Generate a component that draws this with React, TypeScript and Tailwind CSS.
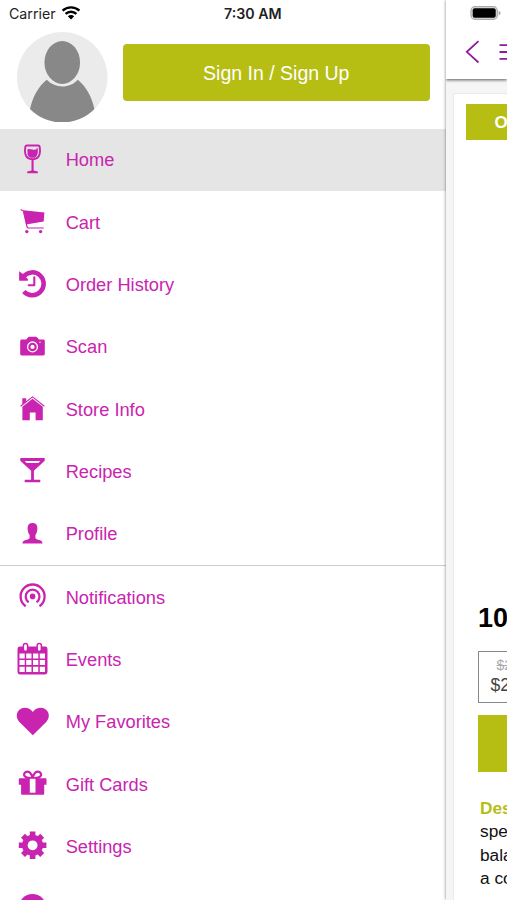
import type { ReactNode } from "react";

interface MenuItem {
  label: string;
  icon: ReactNode;
  active?: boolean;
}

const mainItems: MenuItem[] = [
  {
    label: "Home",
    active: true,
    icon: (
      <>
        <path
          d="M12.8 3.500h11.400c.9 0 1.400.4 1.500 1.300.4 2.600.5 5 0 7-.9 3.600-3.600 5.500-7.200 5.500s-6.300-1.900-7.200-5.500c-.5-2-.4-4.400 0-7 .1-.9.6-1.300 1.500-1.300Z"
          fill="none"
          stroke="currentColor"
          strokeWidth="1.900"
        />
        <path d="M13.500 7.300c1.600-.7 3.200-.2 4.800.2 1.600.4 3.200.3 5-.4v4.300c0 3-1.800 4.400-4.800 4.400s-5-1.400-5-4.400Z" />
        <path d="M23.300 6v5.500" stroke="currentColor" strokeWidth=".9" />
        <path d="M17.500 17.500h2.100v11l4.300.9v1.800H13.200v-1.800l4.300-.9Z" />
      </>
    ),
  },
  {
    label: "Cart",
    icon: (
      <>
        <path d="M9.400 6.300 30.400 8.500l-.7 9-17.600 3.100Z" />
        <path
          d="M7 5.700 9.300 6.800l3.700 15.800c.2 1 .6 1.400 1.600 1.400h14.700"
          fill="none"
          stroke="currentColor"
          strokeWidth="1.200"
          strokeLinecap="round"
        />
        <circle cx="12.800" cy="27.600" r="1.700" />
        <circle cx="26.600" cy="27.600" r="1.700" />
      </>
    ),
  },
  {
    label: "Order History",
    icon: (
      <>
        <path
          d="M9.500 10.500a11.400 11.400 0 1 1 .3 14.900"
          fill="none"
          stroke="currentColor"
          strokeWidth="4.500"
        />
        <path d="M5.100 5.200 8.200 7.400l5.800 5.900-.2 1.500H6c-.6 0-.9-.3-.9-.9Z" />
        <path
          d="M20.300 11.300v7.900h-5.600"
          fill="none"
          stroke="currentColor"
          strokeWidth="2.100"
          strokeLinecap="round"
          strokeLinejoin="round"
        />
      </>
    ),
  },
  {
    label: "Scan",
    icon: (
      <>
        <path d="M7.800 10.500h4.400l1.700-2.100c.4-.5.8-.7 1.400-.7h6.600c.6 0 1 .2 1.400.7l1.700 2.100h4.200c1 0 1.600.6 1.600 1.600v12.700c0 1-.6 1.600-1.600 1.600H7.800c-1 0-1.600-.6-1.600-1.600V12.100c0-1 .6-1.600 1.600-1.600Z" />
        <circle cx="18.500" cy="17.900" r="4.900" fill="none" stroke="#fff" strokeWidth="1.300" />
        <circle cx="18.500" cy="17.900" r="2.100" fill="#fff" />
        <circle cx="26" cy="13.200" r=".7" fill="#fff" />
      </>
    ),
  },
  {
    label: "Store Info",
    icon: (
      <>
        <path d="M8.300 7.200h3.900v3.300l-3.900 3.200Z" />
        <path
          d="m6.600 15.200 11.900-9.300 11.900 9.300"
          fill="none"
          stroke="currentColor"
          strokeWidth="1.100"
        />
        <path d="m8.400 15.700 10.100-7.900 10.300 7.900v13.600h-7.200v-7.800h-5.800v7.800H8.400Z" />
      </>
    ),
  },
  {
    label: "Recipes",
    icon: (
      <>
        <path
          fillRule="evenodd"
          d="M6.300 5h24.400v2.800l-10.800 10v8.900h6.400v2.600H10.700v-2.600h6.400v-8.900L6.300 7.800Zm4.400 3 1.900 1.900h11.800L26.300 8Z"
        />
      </>
    ),
  },
  {
    label: "Profile",
    icon: (
      <path d="M18.500 7c3.200 0 4.900 1.900 4.900 5 0 3.200-.9 5.800-2 7.100v2.500c0 1.200.8 1.600 2.700 2.100 3.100.8 4.400 1.500 4.400 3.700h-20c0-2.200 1.300-2.900 4.400-3.700 1.900-.5 2.700-.9 2.700-2.100v-2.500c-1.100-1.300-2-3.900-2-7.100 0-3.100 1.700-5 4.900-5Z" />
    ),
  },
];

const moreItems: MenuItem[] = [
  {
    label: "Notifications",
    icon: (
      <>
        <circle cx="18.600" cy="17.400" r="2.800" />
        <path
          d="M14.700 23.200a6.900 6.900 0 1 1 7.800 0M11.700 27.300a12 12 0 1 1 13.800 0"
          fill="none"
          stroke="currentColor"
          strokeWidth="2.300"
        />
      </>
    ),
  },
  {
    label: "Events",
    icon: (
      <>
        <rect x="3.500" y="5.500" width="30" height="28" rx="2.400" />
        <path
          fill="#fff"
          d="M5.500 12.500h5.200v5H5.500Zm6.700 0h5.300v5h-5.300Zm6.800 0h5.300v5H19Zm6.800 0h5.200v5h-5.200ZM5.500 19.100h5.200v5H5.500Zm6.700 0h5.300v5h-5.300Zm6.800 0h5.300v5H19Zm6.800 0h5.200v5h-5.200ZM5.500 25.800h5.200v5.300H5.500Zm6.700 0h5.300v5.300h-5.300Zm6.800 0h5.300v5.300H19Zm6.800 0h5.200v5.300h-5.200Z"
        />
        <rect x="9.400" y="2.400" width="4.200" height="8" rx="2.100" fill="#fff" stroke="currentColor" strokeWidth="1.500" />
        <rect x="23.200" y="2.400" width="4.200" height="8" rx="2.100" fill="#fff" stroke="currentColor" strokeWidth="1.500" />
      </>
    ),
  },
  {
    label: "My Favorites",
    icon: (
      <path d="M18.800 31.200 5.400 17.900C2.600 15 2 10.700 3.800 7.700c2.800-4.900 10-5.300 13.700-1.200l1.300 1.500 1.300-1.500c3.700-4.100 10.900-3.700 13.700 1.200 1.800 3 1.200 7.300-1.600 10.200Z" />
    ),
  },
  {
    label: "Gift Cards",
    icon: (
      <>
        <path
          d="M18.600 12c-4 .4-8.400-.4-8.500-3.200-.1-2 1.800-3.200 3.600-3.100 2.700.2 4.100 3.300 4.900 6.300.8-3 2.200-6.100 4.900-6.300 1.800-.1 3.700 1.100 3.600 3.100-.1 2.800-4.500 3.600-8.500 3.200Z"
          fill="none"
          stroke="currentColor"
          strokeWidth="2.200"
        />
        <path d="M5.900 12.300h25.500c.7 0 1.100.4 1.100 1.100v5.400h-2.300v8.600c0 .8-.5 1.300-1.300 1.300H8.400c-.8 0-1.300-.5-1.300-1.300v-8.600H4.800v-5.400c0-.7.4-1.100 1.100-1.100Z" />
        <path d="M15.800 12.800h5.700v13.900h-5.700Z" fill="#fff" />
      </>
    ),
  },
  {
    label: "Settings",
    icon: (
      <>
        <g stroke="currentColor" strokeWidth="5.600">
          <path d="M18.600 3.500v27.600M4.800 17.300h27.600M9 7.700l19.200 19.200M28.200 7.700 9 26.900" />
        </g>
        <circle cx="18.600" cy="17.300" r="10.600" />
        <circle cx="18.600" cy="17.300" r="4.900" fill="#fff" />
      </>
    ),
  },
  {
    label: "",
    icon: <circle cx="18.500" cy="16.800" r="13.800" />,
  },
];

function MenuRow({ label, icon, active }: MenuItem) {
  return (
    <li
      className={`flex h-[62.350px] shrink-0 items-center gap-[15.700px] pl-3.5 ${
        active ? "bg-[#e5e5e5]" : ""
      }`}
    >
      <svg viewBox="0 0 36 36" className="h-9 w-9 shrink-0 fill-current">
        {icon}
      </svg>
      <span className="pt-px text-[18.250px] leading-6 whitespace-nowrap">{label}</span>
    </li>
  );
}

function Drawer() {
  return (
    <aside className="flex h-full w-[446px] shrink-0 flex-col overflow-hidden bg-white">
      {/* Status bar */}
      <div className="flex h-7 shrink-0 items-center font-['Inter',sans-serif] text-sm text-[#222]">
        <span className="w-[54px] pl-[9px] text-[14.200px]">Carrier</span>
        <svg viewBox="0 0 20 15" className="-mt-1 ml-[7px] h-[15px] w-5 text-black">
          <path
            d="M1.600 5.700c4.700-4.500 12.100-4.500 16.800 0M4.600 8.900c3.100-2.900 7.700-2.900 10.800 0"
            fill="none"
            stroke="currentColor"
            strokeWidth="2.400"
          />
          <path d="M6.800 11.300c1.900-1.600 4.500-1.600 6.400 0L10 14.600Z" fill="currentColor" />
        </svg>
        <span className="ml-[143px] text-[14.200px] font-semibold whitespace-nowrap">7:30 AM</span>
      </div>

      {/* Account */}
      <div className="flex h-[100.500px] shrink-0 items-start pl-[17px]">
        <svg viewBox="0 0 90 90" className="mt-[3.500px] h-[90.500px] w-[90.500px]">
          <defs>
            <clipPath id="avatar">
              <circle cx="45" cy="45" r="45" />
            </clipPath>
          </defs>
          <circle cx="45" cy="45" r="45" fill="#ebebeb" />
          <g clipPath="url(#avatar)" fill="#888">
            <path d="M29.500 47.500C21.500 54 15.500 64.500 13 76.500v13.500h64V76.500C74.500 64.500 68.500 54 60.500 47.500 52 56.500 38.500 56.500 29.500 47.500Z" />
            <ellipse cx="45" cy="30.300" rx="17.700" ry="21.300" />
          </g>
        </svg>
        <button className="mt-[15.500px] ml-[15.500px] h-[57.500px] w-[306.500px] rounded bg-[#b6be14] pt-0.5 text-[19.500px] text-white">
          Sign In / Sign Up
        </button>
      </div>

      <ul className="flex shrink-0 flex-col text-[#c924af]">
        {mainItems.map((item) => (
          <MenuRow key={item.label} {...item} />
        ))}
      </ul>
      <ul className="flex flex-col border-t border-[#ccc] text-[#c924af]">
        {moreItems.map((item) => (
          <MenuRow key={item.label} {...item} />
        ))}
      </ul>
    </aside>
  );
}

function ProductPage() {
  return (
    <main className="relative flex h-full w-[61px] shrink-0 flex-col overflow-hidden bg-[#f5f5f5]">
      <header className="relative h-[79px] shrink-0 bg-white shadow-[0_1px_3px_rgba(0,0,0,0.65)]">
        <svg viewBox="0 0 61 79" className="h-[79px] w-[61px]">
          <rect x="25" y="6.700" width="26.300" height="12.600" rx="3.800" fill="#ddd" stroke="#aaa" strokeWidth="1.200" />
          <rect x="26.700" y="8.200" width="23" height="9.600" rx="2" />
          <path d="M52.600 10.800c2.600.9 2.600 3.700 0 4.600Z" fill="#aaa" />
          <path
            d="M32.500 41.200 20.800 51.800l11.700 10.700M53.500 45.200H61M53.500 52H61M53.500 58.800H61"
            fill="none"
            stroke="#8e1b9c"
            strokeWidth="1.800"
          />
        </svg>
      </header>

      {/* Product card */}
      <section className="mt-3.5 ml-[7px] flex w-[420px] grow flex-col border border-b-0 border-[#eaeaea] bg-white whitespace-nowrap">
        <div className="mt-[9.500px] ml-[11.500px] h-[36.500px] bg-[#b6be14] pl-[29px] text-[17px] leading-[37px] font-bold text-white">
          O
        </div>
        <div className="mt-[461.500px] ml-6 text-[27px] leading-[33px] font-bold text-black">10</div>
        <div className="mt-[16.500px] ml-[23.500px] flex h-[51.500px] flex-col border-[1.500px] border-[#888] pl-3">
          <span className="mt-1.5 ml-1.5 text-sm leading-[15px] text-[#aaa] line-through">$2</span>
          <span className="pt-px text-[17.500px] leading-[23px] text-[#444]">$2</span>
        </div>
        <div className="mt-3 ml-[23.500px] h-[57.500px] bg-[#b6be14]" />
        <div className="mt-[25px] ml-[26px] flex flex-col text-[17.300px] leading-[23.300px] text-[#111]">
          <strong className="text-[#b6be14]">Des</strong>
          <span>spe</span>
          <span>bala</span>
          <span>a co</span>
        </div>
      </section>
    </main>
  );
}

export default function App() {
  return (
    <div className="flex h-[900px] w-[507px] overflow-hidden bg-white font-['Liberation_Sans',Arial,sans-serif]">
      <Drawer />
      <div className="relative h-full shadow-[0_0_3px_rgba(0,0,0,0.5)]">
        <ProductPage />
      </div>
    </div>
  );
}
